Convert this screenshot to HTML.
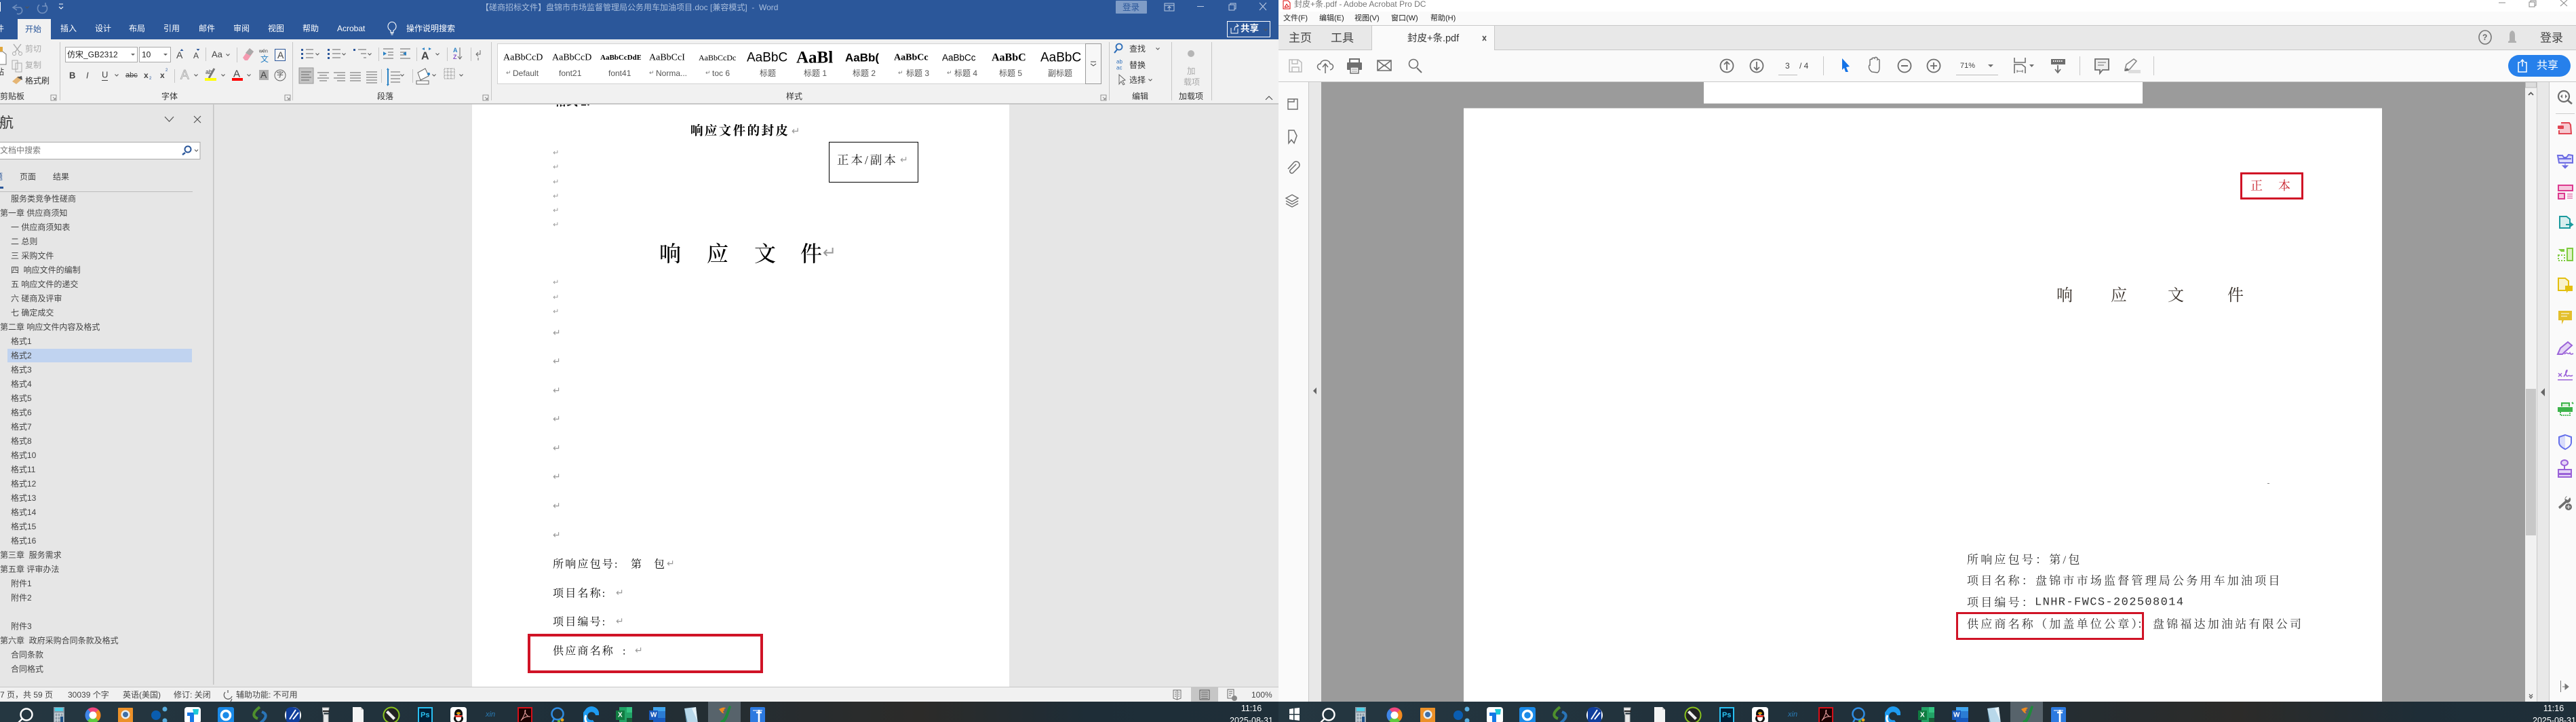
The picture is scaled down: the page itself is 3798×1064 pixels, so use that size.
<!DOCTYPE html>
<html lang="zh-CN"><head><meta charset="utf-8"><title>Word and Acrobat</title>
<style>
html,body{margin:0;padding:0;background:#1f2d37;width:3798px;height:1064px;overflow:hidden}
svg{display:block}
text{dominant-baseline:central;white-space:pre}
.s{font-family:"Liberation Sans","Noto Sans CJK SC",sans-serif}
.r{font-family:"Liberation Serif","Noto Serif CJK SC",serif}
.c{font-family:"Noto Sans CJK SC","Liberation Sans",sans-serif}
.m{font-family:"DejaVu Sans",sans-serif;fill:#999}
.n{font-size:12px;fill:#444}
.u{font-size:12px;fill:#222}
.h{font-size:12px;fill:#444}
.w{fill:none;stroke:#666;stroke-width:1.3}
.pd{font-size:17px;letter-spacing:3.2px;fill:#333}
.wd{font-size:16px;letter-spacing:2.2px;fill:#111}
</style></head><body>
<svg xmlns="http://www.w3.org/2000/svg" width="3798" height="1064" viewBox="0 0 3798 1064">
<defs>
<linearGradient id="g1" x1="0" x2="1" y1="0" y2="0"><stop offset="0" stop-color="#253741"/><stop offset=".45" stop-color="#1f2f39"/><stop offset=".72" stop-color="#2c2b29"/><stop offset=".85" stop-color="#1e2d37"/><stop offset="1" stop-color="#1f2f39"/></linearGradient>
<linearGradient id="g2" x1="0" x2="1" y1="0" y2="0"><stop offset="0" stop-color="#253741"/><stop offset=".5" stop-color="#1f2f39"/><stop offset=".74" stop-color="#2c2b29"/><stop offset=".88" stop-color="#1e2d37"/><stop offset="1" stop-color="#1f2f39"/></linearGradient>
<path id="dn" d="M-2.5-1.5 0 1 2.5-1.5" fill="none" stroke="#555" stroke-width="1.1"/>
<path id="launch" d="M-4-4H4V4H-4ZM-1-1 2.5 2.5M2.5 0V2.5H0" fill="none" stroke="#777" stroke-width=".8"/>
<g id="i-search"><circle cx="2" cy="11" r="8.5" fill="none" stroke="#fff" stroke-width="2.4"/><path d="M-4 17-11 24" stroke="#fff" stroke-width="2.4"/></g>
<g id="i-calc"><rect x="-8" width="16" height="24" fill="#8b99a5"/><rect x="-6" y="1" width="12" height="5" fill="#4fd0e8"/><path d="M-6 9H6V24H-6ZM-2 9V24M2 9V24M-6 14H6M-6 19H6" fill="none" stroke="#dfe6ea"/><rect x="2" y="14" width="4" height="10" fill="#1b4f86"/></g>
<g id="i-wheel" fill="none" stroke-width="6"><circle cy="12" r="8.5" fill="#fff" stroke="none"/><circle cy="12" r="8.5" stroke="#f0477f" stroke-dasharray="14 40" transform="rotate(-135 0 12)"/><circle cy="12" r="8.5" stroke="#f48a1f" stroke-dasharray="14 40" transform="rotate(-45 0 12)"/><circle cy="12" r="8.5" stroke="#5ecb3e" stroke-dasharray="14 40" transform="rotate(45 0 12)"/><circle cy="12" r="8.5" stroke="#3f86e8" stroke-dasharray="14 40" transform="rotate(135 0 12)"/></g>
<g id="i-cam"><rect x="-11" y="1" width="22" height="22" rx="1" fill="#ec9129"/><circle cy="11" r="6.5" fill="#e6eef2"/><circle cy="11" r="4" fill="#3f6fa6"/></g>
<g id="i-dots"><circle cx="-5" cy="12" r="7" fill="#0a5db0"/><circle cx="8" cy="3" r="3.5" fill="#59aee0"/><circle cx="8" cy="20" r="3.5" fill="#59aee0"/></g>
<g id="i-bw"><rect x="-12" width="24" height="24" rx="4" fill="#fff"/><path d="M-8 8H2V22H-4V13H-8Z" fill="#1578e6"/><path d="M0 3H9L8 11H2Z" fill="#1fc9d8"/></g>
<g id="i-ring"><rect x="-12" width="24" height="24" rx="3" fill="#1a8ae8"/><circle cy="12" r="6.5" fill="none" stroke="#fff" stroke-width="3.5"/></g>
<g id="i-swirl" fill="none" stroke-width="4"><path d="M0 0C-11 8-11 14-3 17" stroke="#4e8f2d"/><path d="M0 24C11 16 11 10 3 7" stroke="#2a75b8"/><path d="M-3 13H4" stroke="#153a55"/></g>
<g id="i-round"><circle cy="12" r="12" fill="#fff"/><path d="M-10 4C-7-2 7 -1 10 6L10 20C6 25-7 25-10 20Z" fill="#103e9c"/><path d="M-5 18 4 4M0 18 8 8" stroke="#fff" stroke-width="2"/></g>
<g id="i-pen"><path d="M-5 1H5L4 8H-3L-3 24H4V11H-4" fill="#e8e8e8" stroke="#bbb"/><path d="M-4 6H6" stroke="#222" stroke-width="2"/></g>
<g id="i-doc"><path d="M-8 0H4L8 4V24H-8Z" fill="#f4f4f4"/><path d="M4 0V4H8" fill="#ccc"/></g>
<g id="i-green"><circle cy="12" r="11.5" fill="#222" stroke="#88c21e" stroke-width="2"/><path d="M-5 5 6 16 3 19-8 8Z" fill="#eee"/></g>
<g id="i-ps"><rect x="-10" y="1" width="20" height="23" fill="#001e36" stroke="#2ac1f2" stroke-width="2"/></g>
<g id="i-qq"><rect x="-12" width="24" height="24" rx="4" fill="#fff"/><ellipse cy="10" rx="6" ry="7" fill="#111"/><ellipse cy="17" rx="7" ry="6" fill="#111"/><ellipse cy="16" rx="4" ry="5" fill="#fff"/><path d="M-6 12H6L4 15H-4Z" fill="#e8392d"/><ellipse cy="9" rx="3" ry="1.5" fill="#f7b500"/></g>
<g id="i-acro"><rect x="-10" y="1" width="20" height="23" fill="#1a0303" stroke="#d6101a" stroke-width="2"/><path d="M-6 20C0 12 2 2 0 5 -1 9 5 15 7 14 2 13-3 16-6 20Z" fill="none" stroke="#e9a09f" stroke-width="1.1"/></g>
<g id="i-chat"><circle cx="-1" cy="10" r="8.5" fill="none" stroke="#2f8de3" stroke-width="2.5"/><circle cx="6" cy="19" r="2.4" fill="#e8a317"/><circle cx="1" cy="21" r="2" fill="#65b72f"/><path d="M-6 17-9 23" stroke="#2f8de3" stroke-width="2.5"/></g>
<g id="i-q"><path d="M-9 4A11 11 0 0 1 11 8V12H6A6 6 0 1 0 2 19L6 25H-12V8Z" fill="#1e9bf0"/><path d="M-6 24A10 10 0 0 1-8 12" stroke="#fff" stroke-width="3" fill="none"/></g>
<g id="i-x"><rect x="-7" width="19" height="24" fill="#22a366"/><rect x="4" width="8" height="8" fill="#33c481"/><rect x="4" y="16" width="8" height="8" fill="#185c37"/><rect x="-12" y="5" width="13" height="14" fill="#107c41"/></g>
<g id="i-w"><rect x="-6" width="18" height="24" fill="#2b7cd3"/><rect x="-6" width="18" height="6" fill="#41a5ee"/><rect x="-6" y="16" width="18" height="8" fill="#185abd"/><rect x="-12" y="5" width="13" height="14" fill="#185abd"/></g>
<g id="i-glass"><path d="M-9 2 8 0 11 24-4 24Z" fill="#b8d8ea"/><path d="M-9 2-4 24-6 22Z" fill="#6da6c4"/><path d="M2 2 8 0 10 20Z" fill="#e6f2f8"/></g>
<g id="i-act"><rect x="-24" y="-8" width="48" height="30" fill="#57636b"/><path d="M-8 3C-2 0 1 0 2 2 0 2-1 3 0 5-3 6-2 8 0 9-3 10-5 7-8 3Z" fill="#f08a1d"/><path d="M7-2C3 6 2 14-3 19-8 20-5 24-2 24 4 20 6 12 10-1Z" fill="#1e8a3b"/></g>
<g id="i-arr"><rect x="-11" width="22" height="24" rx="2" fill="#2d7ae0"/><path d="M-2 8H6M2 4V8M2 8V24" stroke="#fff" stroke-width="2.6"/><path d="M-7 5H7" stroke="#fff" stroke-width="1"/></g>
</defs>

<!-- ===== WORD DOCUMENT AREA ===== -->
<rect x="0" y="153" width="1885" height="860" fill="#e6e6e6"/>
<rect x="314" y="154" width="1.5" height="855" fill="#c4c4c4"/>
<rect x="696" y="153" width="792" height="860" fill="#fff"/>

<g class="r">
<text x="818" y="150" font-size="17" font-weight="700" fill="#111">格式 2:</text>
<text x="1018" y="194" font-size="18.5" font-weight="700" letter-spacing="2.4" fill="#000">响应文件的封皮</text>
<text x="972" y="374" font-size="32" font-weight="500" fill="#000">响</text>
<text x="1042" y="374" font-size="32" font-weight="500" fill="#000">应</text>
<text x="1112" y="374" font-size="32" font-weight="500" fill="#000">文</text>
<text x="1180" y="374" font-size="32" font-weight="500" fill="#000">件</text>
<text x="1234" y="236" font-size="17.5" letter-spacing="3" fill="#222">正本/副本</text>
<text class="wd" x="815" y="832">所响应包号:</text><text class="wd" x="930" y="832">第</text><text class="wd" x="964" y="832">包</text>
<text class="wd" x="815" y="875">项目名称:</text>
<text class="wd" x="815" y="917">项目编号:</text>
<text class="wd" x="815" y="960">供应商名称</text><text class="wd" x="918" y="960">:</text>
</g>
<rect x="1222.500" y="209.500" width="131" height="59" fill="none" stroke="#000" stroke-width="1"/>
<g class="m" font-size="11">
<text x="1167" y="193" font-size="15">↵</text>
<text x="1327" y="236" font-size="14">↵</text>
<text x="815" y="225">↵</text><text x="815" y="246">↵</text><text x="815" y="268">↵</text><text x="815" y="289">↵</text><text x="815" y="310">↵</text><text x="815" y="331">↵</text>
<text x="1213" y="372" font-size="24">↵</text>
<text x="815" y="416">↵</text><text x="815" y="438">↵</text><text x="815" y="459">↵</text>
<g font-size="14"><text x="815" y="491">↵</text><text x="815" y="533">↵</text><text x="815" y="576">↵</text><text x="815" y="618">↵</text><text x="815" y="661">↵</text><text x="815" y="703">↵</text><text x="815" y="746">↵</text><text x="815" y="789">↵</text>
<text x="983" y="831">↵</text><text x="908" y="874">↵</text><text x="908" y="916">↵</text><text x="936" y="959">↵</text></g>
</g>
<rect x="780" y="936" width="343" height="54" fill="none" stroke="#d01326" stroke-width="4"/>

<!-- nav pane -->
<text class="c" x="-22" y="180" font-size="21" fill="#333">导航</text>
<path d="M243 172 249.500 179 256 172" fill="none" stroke="#555" stroke-width="1.2"/>
<path d="M286 171 296 181M296 171 286 181" stroke="#555" stroke-width="1.2"/>
<rect x="-2" y="209.500" width="297" height="25" fill="#fff" stroke="#aaa"/>
<text class="c" x="-12" y="221" font-size="12" fill="#777">在文档中搜索</text>
<circle cx="277" cy="220" r="4.500" fill="none" stroke="#2b579a" stroke-width="2"/><path d="M273 225 269 228" stroke="#2b579a" stroke-width="2.4"/>
<use href="#dn" x="289.500" y="222"/>
<text class="c" x="-20" y="260" font-size="12" fill="#2b579a">标题</text>
<text class="c" x="29" y="260" font-size="12" fill="#444">页面</text>
<text class="c" x="78" y="260" font-size="12" fill="#444">结果</text>
<rect x="0" y="275" width="5" height="3" fill="#2b579a"/>
<rect x="0" y="282" width="284" height="1" fill="#bdbdbd"/>
<rect x="11" y="514" width="272" height="20" fill="#c0d3f0"/>
<g class="s n">
<text x="16" y="293">服务类竞争性磋商</text>
<text x="0" y="314">第一章 供应商须知</text>
<text x="16" y="335">一 供应商须知表</text>
<text x="16" y="356">二 总则</text>
<text x="16" y="377">三 采购文件</text>
<text x="16" y="398">四  响应文件的编制</text>
<text x="16" y="419">五 响应文件的递交</text>
<text x="16" y="440">六 磋商及评审</text>
<text x="16" y="461">七 确定成交</text>
<text x="0" y="482">第二章 响应文件内容及格式</text>
<text x="16" y="503">格式1</text><text x="16" y="524">格式2</text><text x="16" y="545">格式3</text><text x="16" y="566">格式4</text><text x="16" y="587">格式5</text><text x="16" y="608">格式6</text><text x="16" y="629">格式7</text><text x="16" y="650">格式8</text><text x="16" y="671">格式10</text><text x="16" y="692">格式11</text><text x="16" y="713">格式12</text><text x="16" y="734">格式13</text><text x="16" y="755">格式14</text><text x="16" y="776">格式15</text><text x="16" y="797">格式16</text>
<text x="0" y="818">第三章  服务需求</text>
<text x="0" y="839">第五章 评审办法</text>
<text x="16" y="860">附件1</text><text x="16" y="881">附件2</text><text x="16" y="923">附件3</text>
<text x="0" y="944">第六章  政府采购合同条款及格式</text>
<text x="16" y="965">合同条款</text><text x="16" y="986">合同格式</text>
</g>

<!-- status bar -->
<rect x="0" y="1012" width="1885" height="1.5" fill="#c6c6c6"/>
<rect x="0" y="1013" width="1885" height="21" fill="#f1f1f1"/>
<g class="s u" fill="#444">
<text x="0" y="1024" fill="#444">7 页，共 59 页</text>
<text x="100" y="1024" fill="#444">30039 个字</text>
<text x="181" y="1024" fill="#444">英语(美国)</text>
<text x="256" y="1024" fill="#444">修订: 关闭</text>
<text x="348" y="1024" fill="#444">辅助功能: 不可用</text>
<text x="1845" y="1024" fill="#444">100%</text>
</g>
<path d="M332 1020A6 6 0 1 0 342 1026M336 1017V1021M342 1030 340 1034" fill="none" stroke="#555" stroke-width="1.2"/>
<rect x="1756" y="1013" width="40" height="21" fill="#c6c6c6"/>
<path d="M1730 1017H1741V1029L1735.500 1031 1730 1029ZM1735.500 1017V1031M1732 1020H1734M1732 1023H1734M1732 1026H1734M1737 1020H1739M1737 1023H1739M1737 1026H1739" fill="none" stroke="#666" stroke-width=".9"/>
<path d="M1769 1017H1783V1031H1769ZM1771 1020H1781M1771 1023H1781M1771 1026H1781M1771 1029H1781" fill="none" stroke="#555"/>
<path d="M1810 1016H1819V1029H1810ZM1812 1019H1817M1812 1022H1817M1812 1025H1815" fill="none" stroke="#666"/><circle cx="1820" cy="1029" r="4" fill="#888"/>

<!-- ===== WORD CHROME ===== -->
<rect x="0" y="0" width="1885" height="58" fill="#2b579a"/>
<rect x="26" y="28" width="49" height="30" fill="#f1f1f1"/>
<rect x="0" y="58" width="1885" height="94" fill="#f1f1f1"/>
<rect x="0" y="152" width="1885" height="2" fill="#c6c6c6"/>

<rect x="0" y="3" width="1" height="14" fill="#fff"/>
<path d="M25 7 19 11 25 15M19 11H30A4.500 4.500 0 0 1 25 20" fill="none" stroke="#6f8ebd" stroke-width="1.6"/>
<use href="#dn" x="40" y="11" style="stroke:#6f8ebd"/>
<path d="M58 7A7 7 0 1 0 67 7M67 4V9H62" fill="none" stroke="#6f8ebd" stroke-width="1.6"/>
<path d="M87 6H93M87 10 90 13 93 10" fill="none" stroke="#fff" stroke-width="1.1"/>
<text class="s" x="709" y="11" font-size="12" fill="#a9bedc">【磋商招标文件】盘锦市市场监督管理局公务用车加油项目.doc [兼容模式]  -  Word</text>

<rect x="1645" y="1" width="46" height="19" rx="1" fill="#7f9cc6"/>
<text class="s" x="1655" y="11" font-size="12.500" fill="#2b579a">登录</text>
<path d="M1717 5H1731V16H1717ZM1717 8H1731M1724 15V10M1721.500 12 1724 9.500 1726.500 12" fill="none" stroke="#b9c8e0"/>
<rect x="1765" y="9" width="10" height="1" fill="#b9c8e0"/>
<path d="M1812 7H1820V15H1812ZM1814 7V5H1822V13H1820" fill="none" stroke="#b9c8e0"/>
<path d="M1857 4 1867 15M1867 4 1857 15" stroke="#b9c8e0" stroke-width="1.1"/>

<text class="s" x="-18" y="42" font-size="12" fill="#fff">文件</text>
<text class="s" x="37" y="43" font-size="12" fill="#2b579a">开始</text>
<g class="s" font-size="12" fill="#fff">
<text x="89" y="42">插入</text><text x="140" y="42">设计</text><text x="190" y="42">布局</text><text x="241" y="42">引用</text><text x="293" y="42">邮件</text><text x="344" y="42">审阅</text><text x="395" y="42">视图</text><text x="446" y="42">帮助</text><text x="497" y="42">Acrobat</text><text x="599" y="42">操作说明搜索</text>
</g>
<path d="M580 45A6 6.500 0 1 0 576 45V48H580ZM576 49H580M576.500 51H579.500" fill="none" stroke="#fff" stroke-width="1.1"/>
<rect x="1809.500" y="31.500" width="63" height="23" fill="#2b579a" stroke="#fff"/>
<text class="s" x="1829" y="42" font-size="13.500" font-weight="700" fill="#fff">共享</text>
<path d="M1815 41V49H1825V42M1820 45C1820 40 1822 38 1825 38M1823 35 1826 38 1823 40" fill="none" stroke="#fff"/>
<use href="#dn" x="1866" y="44" style="stroke:#fff"/>

<!-- ribbon separators -->
<g fill="#c6c6c6"><rect x="88" y="62" width="1" height="86"/><rect x="431" y="62" width="1" height="86"/><rect x="724" y="62" width="1" height="86"/><rect x="1635" y="62" width="1" height="86"/><rect x="1727" y="62" width="1" height="86"/><rect x="1786" y="62" width="1" height="86"/>
<rect x="349" y="70" width="1" height="22"/><rect x="303" y="70" width="1" height="20"/><rect x="257" y="102" width="1" height="20"/><rect x="558" y="70" width="1" height="20"/><rect x="614" y="70" width="1" height="20"/><rect x="659" y="70" width="1" height="20"/><rect x="694" y="70" width="1" height="20"/><rect x="562" y="102" width="1" height="20"/><rect x="608" y="102" width="1" height="20"/></g>
<!-- clipboard -->
<path d="M0 76H4L9 80V95H0" fill="#fff" stroke="#777"/>
<rect x="0" y="69" width="4" height="7" fill="#e0a63c"/>
<text class="s" x="-18" y="106" font-size="12" fill="#333">粘贴</text>
<path d="M20 65 29 77M31 65 22 77" stroke="#aaa" stroke-width="1.4"/><circle cx="21" cy="79" r="2.500" fill="none" stroke="#aaa"/><circle cx="30" cy="79" r="2.500" fill="none" stroke="#aaa"/>
<path d="M18 89H26V102H18ZM23 93H32V106H23Z" fill="#f1f1f1" stroke="#aaa"/>
<path d="M18 120 27 112 32 117 24 124Z" fill="#e5b574"/><path d="M25 114 32 112 33 118" fill="#555"/>
<text class="s" x="37" y="72" font-size="12" fill="#aaa">剪切</text>
<text class="s" x="37" y="96" font-size="12" fill="#aaa">复制</text>
<text class="s" x="37" y="119" font-size="12" fill="#333">格式刷</text>
<text class="s" x="0" y="142" font-size="12" fill="#333">剪贴板</text>
<use href="#launch" x="79" y="144"/>
<!-- font group -->
<rect x="96.500" y="69.500" width="106" height="22" fill="#fff" stroke="#aaa"/>
<text class="s" x="99" y="80.500" font-size="12" fill="#222">仿宋_GB2312</text>
<path d="M193 79H199L196 82Z" fill="#666"/>
<rect x="205.500" y="69.500" width="46" height="22" fill="#fff" stroke="#aaa"/>
<text class="s" x="209" y="80.500" font-size="12" fill="#222">10</text>
<path d="M241 79H247L244 82Z" fill="#666"/>
<g class="s" fill="#444">
<text x="260" y="81" font-size="14">A</text><path d="M268 72 270.500 75H265.500Z" fill="#2b579a"/>
<text x="285" y="82" font-size="12">A</text><path d="M292 75 294.500 72H289.500Z" fill="#2b579a"/>
<text x="312" y="80" font-size="13">Aa</text><use href="#dn" x="336" y="81"/>
</g>
<path d="M358 85 368 71 374 76 365 89H361Z" fill="#f49ab0"/><path d="M362 78 368 71 374 76 369 82Z" fill="#aaa"/>
<text class="s" x="382" y="76" font-size="7" fill="#333">wén</text><text class="s" x="384" y="87" font-size="12" fill="#2b82c4">文</text>
<rect x="405.500" y="72.500" width="15" height="17" fill="#f7f7f7" stroke="#2b579a"/><text class="s" x="409" y="81" font-size="14" fill="#444">A</text>
<g class="s" fill="#444">
<text x="102" y="111" font-size="13" font-weight="700">B</text>
<text x="127" y="111" font-size="13" font-style="italic">I</text>
<text x="150" y="110" font-size="13">U</text><rect x="150" y="118" width="9" height="1" fill="#444"/><use href="#dn" x="172" y="111"/>
<text x="185" y="111" font-size="11">abc</text><rect x="185" y="111" width="18" height="1" fill="#444"/>
<text x="212" y="111" font-size="12" font-weight="700">x</text><text x="220" y="116" font-size="6" fill="#2b579a">2</text>
<text x="236" y="111" font-size="12" font-weight="700">x</text><text x="244" y="104" font-size="6" fill="#2b579a">2</text>
</g>
<text class="s" x="266" y="111" font-size="19" fill="#e8e8e8" stroke="#aaa" stroke-width=".8">A</text><use href="#dn" x="289" y="111"/>
<text class="s" x="303" y="106" font-size="9" fill="#444">ab</text><path d="M308 115 316 101" stroke="#777" stroke-width="3"/><rect x="302" y="115" width="17" height="4" fill="#ffff00"/><use href="#dn" x="329" y="111"/>
<text class="s" x="344" y="109" font-size="15" fill="#444">A</text><rect x="342" y="115" width="16" height="4" fill="#ff0000"/><use href="#dn" x="367" y="111"/>
<rect x="382" y="103" width="14" height="15" fill="#b0b0b0"/><text class="s" x="384" y="110" font-size="14" fill="#444">A</text>
<circle cx="413" cy="111" r="8" fill="none" stroke="#666"/><text class="s" x="408" y="111" font-size="10" fill="#444">字</text>
<text class="s" x="238" y="142" font-size="12" fill="#333">字体</text>
<use href="#launch" x="424" y="144"/>
<!-- paragraph group -->
<g fill="none" stroke="#666">
<path d="M451 73H462M451 79H462M451 85H462"/><path d="M490 73H502M490 79H502M490 85H502"/><path d="M528 73H540M532 79H540M536 85H540"/>
<path d="M565 72H580M572 77H580M572 81H580M565 86H580"/><path d="M590 72H605M590 77H598M590 81H598M590 86H605"/>
<path d="M468 107H485M471 111H482M468 115H485M471 119H482"/><path d="M492 107H509M497 111H509M492 115H509M497 119H509"/><path d="M516 107H532M516 111H532M516 115H532M516 119H532"/>
<path d="M540 106H556M540 110H556M540 114H556M540 118H556M540 122H556"/><path d="M576 106H590M576 111H590M576 116H590M576 121H590"/>
</g>
<g fill="#2b579a"><rect x="444" y="72" width="3" height="3"/><rect x="444" y="78" width="3" height="3"/><rect x="444" y="84" width="3" height="3"/><rect x="483" y="72" width="3" height="3"/><rect x="483" y="78" width="3" height="3"/><rect x="483" y="84" width="3" height="3"/><rect x="521" y="72" width="3" height="3"/>
<path d="M571 79 566 76V82Z" fill="#2b82c4" transform="translate(-1 0) scale(1)"/><path d="M594 79 599 76V82Z" fill="#2b82c4"/>
<path d="M570 103H574L571.500 100ZM570 124H574L571.500 127Z" fill="#2b82c4"/><rect x="571" y="103" width="2" height="21" fill="#2b82c4"/></g>
<use href="#dn" x="468" y="80"/><use href="#dn" x="507" y="80"/><use href="#dn" x="545" y="80"/>
<text class="s" x="621" y="83" font-size="16" font-weight="700" fill="#444">A</text><path d="M622 72 626 70V74ZM636 72 632 70V74Z" fill="#2b82c4"/><use href="#dn" x="645" y="80"/>
<text class="s" x="668" y="74" font-size="9" fill="#2b82c4" font-weight="700">A</text><text class="s" x="668" y="84" font-size="9" fill="#8452c8" font-weight="700">Z</text><path d="M678 70V86M675 83 678 87 681 83" fill="none" stroke="#666"/>
<path d="M708 74V80H702M705 77 702 80 705 83M705 85V89" fill="none" stroke="#666"/>
<rect x="441" y="100" width="21" height="23" fill="#c4c4c4" stroke="#999"/>
<path d="M444 106H459M444 110H456M444 114H459M444 118H456" stroke="#666"/>
<use href="#dn" x="593" y="111"/>
<path d="M620 118 616 107 627 101 632 112Z" fill="#fff" stroke="#666"/><rect x="614" y="119" width="18" height="5" fill="#fff" stroke="#666"/><circle cx="632" cy="109" r="2" fill="#2b82c4"/>
<use href="#dn" x="640" y="111"/>
<path d="M655 101H670V116H655ZM660 101V116M665 101V116M655 106H670M655 111H670" fill="none" stroke="#777" stroke-dasharray="1 1"/>
<use href="#dn" x="680" y="111"/>
<text class="s" x="556" y="142" font-size="12" fill="#333">段落</text>
<use href="#launch" x="716" y="144"/>
<!-- styles gallery -->
<rect x="733.500" y="64.500" width="867" height="59" fill="#fff" stroke="#d2d2d2"/>
<rect x="1600.500" y="64.500" width="23" height="59" fill="#f7f7f7" stroke="#999"/>
<path d="M1608 91H1616M1608 94 1612 97 1616 94" fill="none" stroke="#444"/>
<svg x="742" y="66" width="59" height="36"><text class="r" x="0" y="19" font-size="14" fill="#000">AaBbCcDc</text></svg>
<svg x="814" y="66" width="60" height="36"><text class="r" x="0" y="19" font-size="14" fill="#000">AaBbCcD</text></svg>
<svg x="885" y="66" width="60" height="36"><text class="r" x="0" y="19" font-size="11" font-weight="700" fill="#000">AaBbCcDdEe</text></svg>
<svg x="957" y="66" width="60" height="36"><text class="r" x="0" y="19" font-size="14" fill="#000">AaBbCcI</text></svg>
<svg x="1030" y="66" width="59" height="36"><text class="r" x="0" y="19" font-size="12" fill="#000">AaBbCcDc</text></svg>
<svg x="1101" y="66" width="60" height="36"><text class="s" x="0" y="19" font-size="19" fill="#000">AaBbC</text></svg>
<svg x="1174" y="66" width="58" height="36"><text class="r" x="0" y="19" font-size="25" font-weight="700" fill="#000">AaBl</text></svg>
<svg x="1246" y="66" width="60" height="36"><text class="s" x="0" y="19" font-size="17" font-weight="700" fill="#000">AaBb(</text></svg>
<svg x="1318" y="66" width="60" height="36"><text class="r" x="0" y="19" font-size="14" font-weight="700" fill="#000">AaBbCc</text></svg>
<svg x="1389" y="66" width="60" height="36"><text class="s" x="0" y="19" font-size="13.500" fill="#000">AaBbCc</text></svg>
<svg x="1462" y="66" width="60" height="36"><text class="r" x="0" y="19" font-size="16" font-weight="700" fill="#000">AaBbC</text></svg>
<svg x="1534" y="66" width="60" height="36"><text class="s" x="0" y="19" font-size="19" fill="#000">AaBbC</text></svg>
<g class="s" font-size="12" fill="#555">
<text x="756" y="108">Default</text><text x="824" y="108">font21</text><text x="897" y="108">font41</text><text x="967" y="108">Norma...</text><text x="1050" y="108">toc 6</text><text x="1120" y="108">标题</text><text x="1185" y="108">标题 1</text><text x="1257" y="108">标题 2</text><text x="1336" y="108">标题 3</text><text x="1407" y="108">标题 4</text><text x="1473" y="108">标题 5</text><text x="1545" y="108">副标题</text>
</g>
<g class="m" font-size="9" fill="#777"><text x="746" y="108" style="fill:#777">↵</text><text x="957" y="108" style="fill:#777">↵</text><text x="1040" y="108" style="fill:#777">↵</text><text x="1324" y="108" style="fill:#777">↵</text><text x="1396" y="108" style="fill:#777">↵</text></g>
<text class="s" x="1159" y="142" font-size="12" fill="#333">样式</text>
<use href="#launch" x="1627" y="144"/>
<!-- editing -->
<circle cx="1650" cy="69" r="4.500" fill="none" stroke="#2b6cb8" stroke-width="1.8"/><path d="M1647 73 1643 78" stroke="#2b6cb8" stroke-width="2.2"/>
<text class="s" x="1665" y="72" font-size="12" fill="#333">查找</text><use href="#dn" x="1707" y="72"/>
<text class="s" x="1646" y="91" font-size="8" fill="#2b6cb8">ab</text><text class="s" x="1646" y="100" font-size="8" fill="#2b6cb8">ac</text>
<text class="s" x="1665" y="96" font-size="12" fill="#333">替换</text>
<path d="M1650 110V124L1653 120 1656 125 1658 124 1655 119 1659 118Z" fill="#f1f1f1" stroke="#666"/>
<text class="s" x="1665" y="118" font-size="12" fill="#333">选择</text><use href="#dn" x="1696" y="118"/>
<text class="s" x="1669" y="142" font-size="12" fill="#333">编辑</text>
<circle cx="1756" cy="79" r="5" fill="#b5b5b5"/>
<text class="s" x="1750" y="105" font-size="12.500" fill="#aaa">加</text>
<text class="s" x="1745" y="121" font-size="12" fill="#aaa">载项</text>
<text class="s" x="1738" y="142" font-size="12" fill="#333">加载项</text>
<path d="M1866 147 1871 142 1876 147" fill="none" stroke="#444"/>

<!-- ===== ACROBAT ===== -->
<rect x="1885" y="0" width="1913" height="17" fill="#fff"/>
<rect x="1885" y="17" width="1913" height="20" fill="#fafafa"/>
<rect x="1885" y="37" width="1913" height="1.500" fill="#c8c8c8"/>
<rect x="1885" y="38" width="1913" height="35" fill="#e8e8e8"/>
<rect x="1885" y="73" width="1913" height="1" fill="#c8c8c8"/>
<rect x="1885" y="74" width="1913" height="46" fill="#fafafa"/>
<rect x="1885" y="120" width="1913" height="1.500" fill="#c8c8c8"/>
<rect x="2023" y="38" width="180" height="36" fill="#fafafa"/>
<rect x="2022" y="38" width="1" height="36" fill="#c8c8c8"/><rect x="2203" y="38" width="1" height="36" fill="#c8c8c8"/>
<path d="M1892 1H1899L1902 4V13H1892Z" fill="#fff" stroke="#d00"/><path d="M1894 11 1897 6 1900 10 1894 11" fill="none" stroke="#d00"/>
<text class="s" x="1908" y="6" font-size="12" fill="#777">封皮+条.pdf - Adobe Acrobat Pro DC</text>
<g class="s" font-size="11" fill="#222"><text x="1892" y="27">文件(F)</text><text x="1945" y="27">编辑(E)</text><text x="1997" y="27">视图(V)</text><text x="2051" y="27">窗口(W)</text><text x="2109" y="27">帮助(H)</text></g>
<text class="s" x="1900" y="56" font-size="17" fill="#444">主页</text><text class="s" x="1962" y="56" font-size="17" fill="#444">工具</text>
<text class="s" x="2075" y="57" font-size="14.500" fill="#333">封皮+条.pdf</text>
<path d="M2186 53 2191 60M2191 53 2186 60" stroke="#555" stroke-width="1.6"/>
<path d="M3684 4H3694" stroke="#888"/><path d="M3729 3H3737V10H3729ZM3731 3V1H3739V8H3737" fill="none" stroke="#888" transform="translate(0 0)"/><path d="M3775 0 3785 9M3785 0 3775 9" stroke="#888"/>
<ellipse cx="3664" cy="55" rx="9" ry="10" fill="none" stroke="#777" stroke-width="1.6"/><text class="s" x="3660" y="55" font-size="12" font-weight="700" fill="#666">?</text>
<path d="M3698 61 3700 60V52C3700 47 3702 46 3704 45 3706 46 3708 47 3708 52V60L3710 61V63H3698Z" fill="#b0b0b0"/>
<text class="s" x="3745" y="56" font-size="17" fill="#444">登录</text>
<!-- toolbar icons -->
<path d="M1901 88H1914L1919 92V106H1901ZM1905 88V94H1913V88M1905 106V99H1915V106" fill="none" stroke="#bbb" stroke-width="1.5"/>
<path d="M1954 108V95M1950 99 1954 94 1958 99M1947 103C1941 102 1941 94 1947 94 1948 87 1960 87 1961 94 1967 94 1967 102 1961 103" fill="none" stroke="#6e6e6e" stroke-width="1.5"/>
<path d="M1990 87H2004V93H1990Z" fill="none" stroke="#6e6e6e" stroke-width="2"/><rect x="1986" y="92" width="22" height="11" rx="1" fill="#6e6e6e"/><rect x="1991" y="99" width="12" height="9" fill="#fafafa" stroke="#6e6e6e" stroke-width="1.5"/><path d="M1993 102H2001M1993 105H2001" stroke="#6e6e6e" stroke-width=".8"/>
<path d="M2031 89H2051V104H2031ZM2031 89 2041 97 2051 89M2031 104 2041 96 2051 104" fill="none" stroke="#6e6e6e" stroke-width="1.6"/>
<circle cx="2084" cy="94" r="6.500" fill="none" stroke="#6e6e6e" stroke-width="1.6"/><path d="M2089 100 2096 107" stroke="#6e6e6e" stroke-width="2"/>
<circle cx="2546" cy="97" r="9.500" fill="none" stroke="#6e6e6e" stroke-width="1.8"/><path d="M2546 103V91M2542 95 2546 91 2550 95" fill="none" stroke="#6e6e6e" stroke-width="1.8"/>
<circle cx="2590" cy="97" r="9.500" fill="none" stroke="#6e6e6e" stroke-width="1.8"/><path d="M2590 91V103M2586 99 2590 103 2594 99" fill="none" stroke="#6e6e6e" stroke-width="1.8"/>
<text class="s" x="2632" y="97" font-size="12" fill="#444">3</text><text class="s" x="2653" y="97" font-size="12" fill="#444">/ 4</text><rect x="2622" y="110" width="28" height="1" fill="#bbb"/>
<rect x="2688" y="83" width="1" height="28" fill="#c8c8c8"/>
<path d="M2716 86 2727 98 2722 99 2725 106 2721 106 2719 100 2716 103Z" fill="#1473e6"/>
<path d="M2760 106C2754 102 2755 95 2757 96V88C2758 87 2760 87 2760 88V86C2761 85 2763 85 2764 86V85C2765 84 2767 84 2768 86V88C2769 87 2771 87 2771 89V100C2771 103 2770 106 2768 107Z" fill="none" stroke="#6e6e6e" stroke-width="1.4"/>
<circle cx="2808" cy="97" r="9.500" fill="none" stroke="#6e6e6e" stroke-width="1.8"/><rect x="2803" y="96" width="10" height="2" fill="#6e6e6e"/>
<circle cx="2851" cy="97" r="9.500" fill="none" stroke="#6e6e6e" stroke-width="1.8"/><path d="M2846 97H2856M2851 92V102" stroke="#6e6e6e" stroke-width="1.8"/>
<text class="s" x="2890" y="97" font-size="11" fill="#444">71%</text><path d="M2931 95H2939L2935 99Z" fill="#6e6e6e"/><rect x="2884" y="110" width="62" height="1" fill="#bbb"/>
<path d="M2970 85V92H2986V85M2970 108V95H2981L2986 99V108" fill="none" stroke="#6e6e6e" stroke-width="1.6"/><path d="M2974 105H2982M2974 103V107M2982 103V107" stroke="#6e6e6e"/><path d="M2992 95H2999L2995.500 99Z" fill="#6e6e6e"/>
<rect x="3024" y="87" width="21" height="8" fill="#6e6e6e"/><path d="M3027 90H3042" stroke="#fff" stroke-dasharray="1.500 1.500" stroke-width="2"/><path d="M3034 96V107M3030 102 3034 107 3038 102" fill="none" stroke="#6e6e6e" stroke-width="1.8"/>
<rect x="3066" y="83" width="1" height="28" fill="#c8c8c8"/>
<path d="M3089 87H3109V103H3100L3096 108V103H3089Z" fill="#eee" stroke="#6e6e6e" stroke-width="1.8"/><path d="M3093 92H3105M3093 96H3102" stroke="#6e6e6e"/>
<path d="M3133 103 3135 95 3146 87 3150 90 3140 102Z" fill="none" stroke="#888" stroke-width="1.6"/><rect x="3138" y="103" width="18" height="5" fill="#ddd"/><path d="M3132 105 3136 100 3139 104Z" fill="#666"/>
<rect x="3175" y="83" width="1" height="28" fill="#c8c8c8"/>
<rect x="3698" y="81" width="92" height="32" rx="16" fill="#2680eb"/>
<path d="M3716 92H3713V106H3725V92H3722M3719 98V88M3716.500 91 3719 88 3721.500 91" fill="none" stroke="#fff" stroke-width="1.5"/>
<text class="s" x="3740" y="97" font-size="16" fill="#fff">共享</text>

<!-- panes -->
<rect x="1885" y="121" width="45" height="913" fill="#fafafa"/>
<rect x="1930" y="121" width="18" height="913" fill="#e8e8e8"/>
<rect x="1929" y="121" width="1" height="913" fill="#c8c8c8"/>
<rect x="1948" y="121" width="1775" height="913" fill="#9b9b9b"/>
<rect x="3723" y="121" width="17" height="913" fill="#f1f1f1"/>
<rect x="3740" y="121" width="1" height="913" fill="#c8c8c8"/>
<rect x="3741" y="121" width="17" height="913" fill="#e8e8e8"/>
<rect x="3758" y="121" width="1" height="913" fill="#c8c8c8"/>
<rect x="3759" y="121" width="39" height="913" fill="#fafafa"/>
<rect x="2512" y="121" width="647" height="31" fill="#fff"/>
<rect x="2512" y="152" width="647" height="1" fill="#cfcfcf"/>
<rect x="2158" y="159" width="1354" height="875" fill="#fff"/>
<rect x="2158" y="159" width="1354" height="1" fill="#d0d0d0"/>
<!-- left rail icons -->
<path d="M1899 150H1908V146H1913V161H1899ZM1899 150V146H1908" fill="none" stroke="#6e6e6e" stroke-width="1.4"/>
<path d="M1900 192H1908L1912 200 1908 211 1904 206 1900 211Z" fill="none" stroke="#6e6e6e" stroke-width="1.5"/>
<path d="M1911 242 1902 251A3 3 0 0 0 1906 255L1915 246A5 5 0 0 0 1908 239L1899 249" fill="none" stroke="#6e6e6e" stroke-width="1.5"/>
<path d="M1905 287 1914 292 1905 297 1896 292ZM1896 296 1905 301 1914 296M1896 300 1905 305 1914 300" fill="none" stroke="#6e6e6e" stroke-width="1.4"/>
<path d="M1941 571V581L1936 576Z" fill="#666"/>
<path d="M3752 572V584L3746 578Z" fill="#666"/>
<!-- scrollbar -->
<rect x="3723.500" y="121" width="16" height="8" fill="#ddd" stroke="#bbb"/>
<path d="M3728 140 3731.500 136.500 3735 140" fill="none" stroke="#555" stroke-width="1.6"/>
<rect x="3724" y="573" width="15" height="216" fill="#c8c8c8"/>
<path d="M3729 1023 3731.500 1026 3734 1023M3729 1026 3731.500 1029 3734 1026" fill="none" stroke="#555" stroke-width="1.1"/>
<!-- right tool icons -->
<circle cx="3780" cy="142" r="8" fill="none" stroke="#6e6e6e" stroke-width="2.2"/><path d="M3786 148 3792 153" stroke="#6e6e6e" stroke-width="2.6"/><path d="M3778 139 3775 142 3778 145ZM3782 139 3785 142 3782 145Z" fill="#6e6e6e"/>
<rect x="3768" y="167" width="28" height="1" fill="#ccc"/>
<path d="M3776 181H3788L3790 184 3791 197H3773V192" fill="#f6c9d0" stroke="#e04552" stroke-width="2"/><rect x="3771" y="185" width="9" height="5" rx="1" fill="#e04552"/>
<path d="M3771 229H3778L3780 232H3784L3787 228 3793 229V240H3773ZM3773 234H3791" fill="#dcdcfb" stroke="#6d6de3" stroke-width="2"/><path d="M3782 240V245M3778 244H3786L3782 248Z" fill="#6d6de3" stroke="#6d6de3"/>
<rect x="3772" y="273" width="21" height="8" fill="#f6c8de" stroke="#dc3a8f" stroke-width="2"/><rect x="3772" y="285" width="9" height="8" fill="#f6c8de" stroke="#dc3a8f" stroke-width="2"/><path d="M3785 286H3793M3785 289H3793M3785 292H3793" stroke="#dc3a8f"/>
<path d="M3774 319H3784L3789 323V336H3774Z" fill="#d7eeee" stroke="#1b9a9e" stroke-width="2"/><path d="M3783 331H3792M3789 328 3793 331 3789 334" fill="none" stroke="#1b9a9e" stroke-width="2"/>
<rect x="3785" y="366" width="8" height="18" fill="#dff3c8" stroke="#80cc42" stroke-width="2"/><path d="M3772 376V384H3781V376Z" fill="none" stroke="#80cc42" stroke-width="2" stroke-dasharray="2 2"/><path d="M3772 367H3781V371H3776Z" fill="#80cc42"/>
<path d="M3772 410H3782L3787 414V428H3772Z" fill="#f9f2cc" stroke="#e3bf10" stroke-width="2"/><path d="M3782 421H3793V429H3786L3784 432V429H3782Z" fill="#e3bf10"/>
<path d="M3772 458H3792V472H3780L3777 478V472H3772Z" fill="#e3bf2c"/><path d="M3776 462H3788M3776 466H3785" stroke="#fff"/>
<path d="M3771 522 3775 513 3786 504 3792 509 3781 519 3778 522Z" fill="#e4d4f5" stroke="#9a62d8" stroke-width="2"/><path d="M3781 522C3785 517 3786 524 3789 520 3790 523 3792 522 3794 521" fill="none" stroke="#9a62d8" stroke-width="1.6"/>
<path d="M3772 550 3777 555M3777 550 3772 555" stroke="#9a62d8" stroke-width="1.5"/><path d="M3780 555C3785 548 3786 544 3784 546 3782 549 3783 556 3786 554 3788 552 3790 556 3793 553" fill="none" stroke="#9a62d8" stroke-width="1.6"/><rect x="3771" y="559" width="22" height="1.500" fill="#9a62d8"/>
<path d="M3777 599V594H3788V599" fill="#d5f1d4" stroke="#3cb34a" stroke-width="2"/><rect x="3771" y="600" width="22" height="7" fill="#3cb34a"/><path d="M3775 607V612H3789V607" fill="none" stroke="#3cb34a" stroke-width="1.8" stroke-dasharray="2 1"/><path d="M3792 593 3794 595" stroke="#3cb34a" stroke-width="2"/>
<path d="M3782 641 3773 644V652C3773 657 3778 660 3782 662 3786 660 3791 657 3791 652V644Z" fill="#d9dcfb" stroke="#6570ea" stroke-width="2"/><path d="M3782 642V661C3786 659 3790 656 3790 652V645Z" fill="#fafafa"/>
<rect x="3772" y="699" width="19" height="4" fill="#e5d6f7" stroke="#9a62d8" stroke-width="2"/><path d="M3772 692H3791V698H3772ZM3781 691V687" fill="#e5d6f7" stroke="#9a62d8" stroke-width="2"/><ellipse cx="3781" cy="682" rx="5" ry="4" fill="#e5d6f7" stroke="#9a62d8" stroke-width="2"/>
<path d="M3772 747 3782 738A5 5 0 0 1 3785 731L3782 735 3786 737 3789 733A5 5 0 0 1 3784 741L3774 750Z" fill="#6e6e6e"/><circle cx="3787" cy="747" r="5" fill="#6e6e6e"/><path d="M3784 747H3790M3787 744V750" stroke="#fafafa"/>
<rect x="3775" y="1003" width="1" height="17" fill="#777"/><path d="M3778 1012H3783M3782 1008 3787 1012 3782 1016Z" fill="#777" stroke="#777"/>

<!-- PDF page content -->
<rect x="3304.500" y="255.500" width="90" height="37" fill="none" stroke="#d01326" stroke-width="3"/>
<g class="r">
<text x="3318" y="274" font-size="18" fill="#c8222c">正</text><text x="3359" y="274" font-size="18" fill="#c8222c">本</text>
<text x="3032" y="436" font-size="24" fill="#3a322c">响</text><text x="3112" y="436" font-size="24" fill="#3a322c">应</text><text x="3196" y="436" font-size="24" fill="#3a322c">文</text><text x="3284" y="436" font-size="24" fill="#3a322c">件</text>
<text class="pd" x="2900" y="825">所响应包号：第/包</text>
<text class="pd" x="2900" y="856">项目名称：盘锦市市场监督管理局公务用车加油项目</text>
<text class="pd" x="2900" y="888">项目编号：</text><text x="3000" y="888" style="font-family:'Liberation Mono',monospace;font-size:17px;letter-spacing:1.4px;fill:#333">LNHR-FWCS-202508014</text>
<text class="pd" x="2900" y="920">供应商名称（加盖单位公章）</text><text class="pd" x="3151" y="920">：</text><text class="pd" x="3174" y="920">盘锦福达加油站有限公司</text>
</g>
<rect x="3343" y="712" width="3" height="1" fill="#888"/>
<rect x="2885.500" y="903.500" width="274" height="38" fill="none" stroke="#d01326" stroke-width="3"/>

<!-- ===== TASKBAR ===== -->
<rect x="0" y="1034" width="1885" height="30" fill="url(#g1)"/>
<rect x="1885" y="1034" width="1913" height="30" fill="url(#g2)"/>
<!-- left -->
<use href="#i-search" x="37" y="1042"/><use href="#i-calc" x="87" y="1042"/><use href="#i-wheel" x="137" y="1042"/><use href="#i-cam" x="185" y="1042"/><use href="#i-dots" x="235" y="1042"/><use href="#i-bw" x="284" y="1042"/><use href="#i-ring" x="333" y="1042"/><use href="#i-swirl" x="383" y="1042"/><use href="#i-round" x="432" y="1042"/><use href="#i-pen" x="480" y="1042"/><use href="#i-doc" x="528" y="1042"/><use href="#i-green" x="577" y="1042"/><use href="#i-ps" x="627" y="1042"/><use href="#i-qq" x="676" y="1042"/><use href="#i-acro" x="774" y="1042"/><use href="#i-chat" x="823" y="1042"/><use href="#i-q" x="872" y="1042"/><use href="#i-x" x="920" y="1042"/><use href="#i-w" x="969" y="1042"/><use href="#i-glass" x="1018" y="1042"/><use href="#i-act" x="1068" y="1042"/><use href="#i-arr" x="1117" y="1042"/>
<g class="s">
<text x="620" y="1054" font-size="11" font-weight="700" fill="#2ac1f2">Ps</text>
<text x="716" y="1053" font-size="11" font-style="italic" fill="#2a7db8">xin</text>
<text x="911" y="1054" font-size="10" font-weight="700" fill="#fff">X</text>
<text x="959" y="1054" font-size="10" font-weight="700" fill="#fff">W</text>
<text x="1845" y="1044" font-size="12.500" fill="#fff" text-anchor="middle">11:16</text>
<text x="1845" y="1062" font-size="12.500" fill="#fff" text-anchor="middle">2025-08-31</text>
</g>
<!-- right -->
<path d="M1901 1045 1907 1044V1052H1901ZM1908.500 1043.800 1916 1043V1052H1908.500ZM1901 1053.500H1907V1061L1901 1060ZM1908.500 1053.500H1916V1062L1908.500 1061Z" fill="#fff"/>
<use href="#i-search" x="1957" y="1042"/><use href="#i-calc" x="2006" y="1042"/><use href="#i-wheel" x="2056" y="1042"/><use href="#i-cam" x="2105" y="1042"/><use href="#i-dots" x="2155" y="1042"/><use href="#i-bw" x="2204" y="1042"/><use href="#i-ring" x="2252" y="1042"/><use href="#i-swirl" x="2300" y="1042"/><use href="#i-round" x="2351" y="1042"/><use href="#i-pen" x="2399" y="1042"/><use href="#i-doc" x="2447" y="1042"/><use href="#i-green" x="2496" y="1042"/><use href="#i-ps" x="2546" y="1042"/><use href="#i-qq" x="2595" y="1042"/><use href="#i-acro" x="2692" y="1042"/><use href="#i-chat" x="2741" y="1042"/><use href="#i-q" x="2791" y="1042"/><use href="#i-x" x="2840" y="1042"/><use href="#i-w" x="2890" y="1042"/><use href="#i-glass" x="2939" y="1042"/><use href="#i-act" x="2988" y="1042"/><use href="#i-arr" x="3035" y="1042"/>
<g class="s">
<text x="2539" y="1054" font-size="11" font-weight="700" fill="#2ac1f2">Ps</text>
<text x="2636" y="1053" font-size="11" font-style="italic" fill="#2a7db8">xin</text>
<text x="2831" y="1054" font-size="10" font-weight="700" fill="#fff">X</text>
<text x="2880" y="1054" font-size="10" font-weight="700" fill="#fff">W</text>
<text x="3765" y="1044" font-size="12.500" fill="#fff" text-anchor="middle">11:16</text>
<text x="3766" y="1062" font-size="12.500" fill="#fff" text-anchor="middle">2025-08-31</text>
</g>
</svg>
</body></html>
